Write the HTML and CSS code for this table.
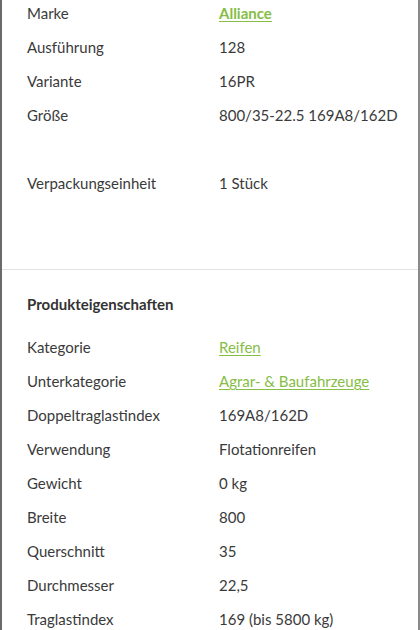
FILE: index.html
```html
<!DOCTYPE html>
<html>
<head>
    <title>Produktdetails</title>
    <link rel="stylesheet" href="styles.css">
</head>
<body>
    <div class="panel">
        <div class="section top-section">
            <div class="row"><span class="label">Marke</span><span class="value"><a class="link strong" href="#">Alliance</a></span></div>
            <div class="row"><span class="label">Ausführung</span><span class="value">128</span></div>
            <div class="row"><span class="label">Variante</span><span class="value">16PR</span></div>
            <div class="row"><span class="label">Größe</span><span class="value">800/35-22.5 169A8/162D</span></div>
            <div class="row empty"></div>
            <div class="row"><span class="label">Verpackungseinheit</span><span class="value">1 Stück</span></div>
        </div>

        <div class="section props">
            <h2>Produkteigenschaften</h2>
            <div class="row"><span class="label">Kategorie</span><span class="value"><a class="link" href="#">Reifen</a></span></div>
            <div class="row"><span class="label">Unterkategorie</span><span class="value"><a class="link" href="#">Agrar- &amp; Baufahrzeuge</a></span></div>
            <div class="row"><span class="label">Doppeltraglastindex</span><span class="value">169A8/162D</span></div>
            <div class="row"><span class="label">Verwendung</span><span class="value">Flotationreifen</span></div>
            <div class="row"><span class="label">Gewicht</span><span class="value">0 kg</span></div>
            <div class="row"><span class="label">Breite</span><span class="value">800</span></div>
            <div class="row"><span class="label">Querschnitt</span><span class="value">35</span></div>
            <div class="row"><span class="label">Durchmesser</span><span class="value">22,5</span></div>
            <div class="row"><span class="label">Traglastindex</span><span class="value">169 (bis 5800 kg)</span></div>
        </div>
    </div>
</body>
</html>
```

FILE: styles.css
```css
body {
    margin: 0;
    font-family: Lato, 'Open Sans', sans-serif;
    font-size: 15px;
    color: #3a3a3a;
    background-color: #ffffff;
    overflow: hidden;
}

.panel {
    width: 416px;
    height: 640px;
    border-left: 2px solid #6a6a6a;
    border-right: 2px solid #8a8a8a;
}

.section {
    padding: 0 0 0 25px;
}

.top-section {
    margin-top: -4px;
    padding-bottom: 69px;
    border-bottom: 1px solid #e2e2e2;
}

.props {
    padding-top: 17px;
}

h2 {
    margin: 0 0 9px 0;
    font-size: 15px;
    font-weight: bold;
    line-height: 34px;
    color: #333;
}

.row {
    display: flex;
    height: 34px;
    line-height: 34px;
}

.label {
    width: 192px;
}

.link {
    color: #86bd45;
    text-decoration: underline;
    text-underline-offset: 2px;
}

.strong {
    font-weight: bold;
}
```
